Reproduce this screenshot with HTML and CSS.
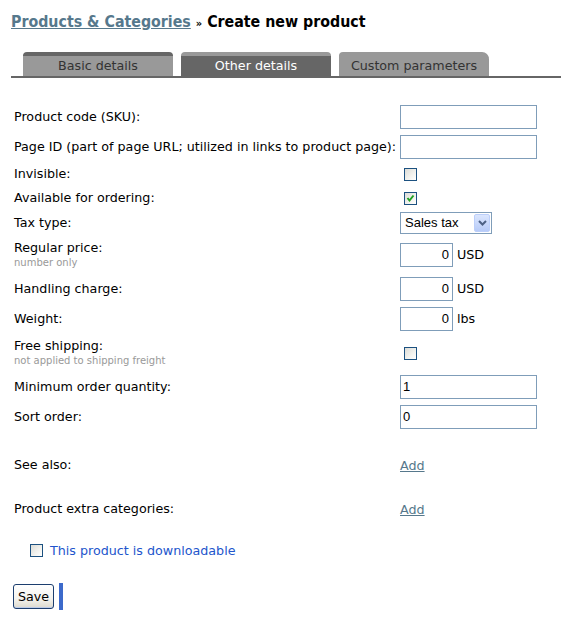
FILE: index.html
```html
<!DOCTYPE html>
<html lang="en">
<head>
<meta charset="utf-8">
<title>Create new product</title>
<link rel="stylesheet" href="styles.css">
</head>
<body>
<div class="page">
  <h1 class="title"><a href="#" class="crumb">Products &amp; Categories</a> <span class="sep">»</span> Create new product</h1>

  <div class="tabs">
    <a href="#" class="tab tab-basic">Basic details</a>
    <a href="#" class="tab tab-active">Other details</a>
    <a href="#" class="tab tab-last">Custom parameters</a>
  </div>

  <form class="form">
    <div class="grid">
      <label class="lbl">Product code (SKU):</label>
      <div class="ctl"><input class="txt wide" type="text" value=""></div>

      <label class="lbl">Page ID (part of page URL; utilized in links to product page):</label>
      <div class="ctl"><input class="txt wide" type="text" value=""></div>

      <label class="lbl">Invisible:</label>
      <div class="ctl"><span class="cb"></span></div>

      <label class="lbl">Available for ordering:</label>
      <div class="ctl"><span class="cb"><svg class="check" width="11" height="11" viewBox="0 0 11 11"><polyline points="2.5,5 4.5,7.5 8.5,2.5" fill="none" stroke="#21a121" stroke-width="2"/></svg></span></div>

      <label class="lbl">Tax type:</label>
      <div class="ctl">
        <div class="select"><span class="select-text">Sales tax</span><span class="select-btn"><svg width="9" height="6" viewBox="0 0 9 6"><polyline points="1,1 4.5,4.5 8,1" fill="none" stroke="#4d6185" stroke-width="2"/></svg></span></div>
      </div>

      <div class="lbl">
        <div>Regular price:</div>
        <div class="hint">number only</div>
      </div>
      <div class="ctl"><input class="txt num" type="text" value="0"><span class="unit">USD</span></div>

      <label class="lbl">Handling charge:</label>
      <div class="ctl"><input class="txt num" type="text" value="0"><span class="unit">USD</span></div>

      <label class="lbl">Weight:</label>
      <div class="ctl"><input class="txt num" type="text" value="0"><span class="unit">lbs</span></div>

      <div class="lbl">
        <div>Free shipping:</div>
        <div class="hint">not applied to shipping freight</div>
      </div>
      <div class="ctl"><span class="cb"></span></div>

      <label class="lbl">Minimum order quantity:</label>
      <div class="ctl"><input class="txt wide" type="text" value="1"></div>

      <label class="lbl">Sort order:</label>
      <div class="ctl"><input class="txt wide" type="text" value="0"></div>
    </div>

    <div class="links">
      <div class="lbl">See also:</div>
      <div class="ctl"><a href="#" class="add">Add</a></div>
      <div class="lbl">Product extra categories:</div>
      <div class="ctl"><a href="#" class="add">Add</a></div>
    </div>

    <div class="download">
      <span class="cb"></span><span class="download-text">This product is downloadable</span>
    </div>

    <div class="actions">
      <button type="button" class="btn">Save</button>
      <span class="bar"></span>
    </div>
  </form>
</div>
</body>
</html>
```
FILE: styles.css
```css
html, body {
  margin: 0;
  padding: 0;
  background: #fff;
}

body {
  font-family: "DejaVu Sans", Verdana, sans-serif;
  font-size: 12.7px;
  color: #000;
}

.page {
  padding-left: 11px;
}

.title {
  margin: 12px 0 0;
  font-family: "DejaVu Sans Condensed", "DejaVu Sans", sans-serif;
  font-weight: bold;
  font-size: 15.8px;
  line-height: 20px;
  color: #000;
}

.crumb {
  color: #56788c;
  text-decoration: underline;
}

.sep {
  font-size: 11px;
}

/* Tabs */
.tabs {
  margin-top: 18px;
  display: flex;
  gap: 8px;
  padding-left: 12px;
  border-bottom: 2px solid #666;
}

.tab {
  width: 150px;
  height: 20px;
  border-top: 4px solid #999;
  background: #999;
  color: #333;
  text-align: center;
  line-height: 19px;
  border-radius: 4px 4px 0 0;
  text-decoration: none;
}

.tab-basic {
  border-top-color: #666;
}

.tab-active {
  background: #666;
  color: #fff;
}

.tab-last {
  border-radius: 4px 7px 0 0;
}

/* Form grid */
.form {
  margin: 24px 0 0;
  padding-left: 3px;
}

.grid {
  display: grid;
  grid-template-columns: 386px 1fr;
  grid-template-rows: 29px 31px 24px 24px 25px 39px 29px 31px 38px 29px 31px;
  align-items: center;
}

.lbl {
  line-height: 16px;
}

.hint {
  font-size: 10px;
  line-height: 14px;
  color: #999;
}

.ctl {
  display: flex;
  align-items: baseline;
}

.txt {
  box-sizing: border-box;
  height: 24px;
  margin: 0;
  border: 1px solid #7f9db9;
  padding: 0 2px;
  font-family: "Liberation Sans", Arial, sans-serif;
  font-size: 13px;
  color: #000;
  background: #fff;
  outline: none;
}

.wide {
  width: 137px;
}

.num {
  width: 53px;
  text-align: right;
  padding-right: 3px;
}

.unit {
  margin-left: 4px;
}

/* Checkbox */
.cb {
  display: inline-block;
  box-sizing: border-box;
  width: 13px;
  height: 13px;
  margin-left: 4px;
  border: 1px solid #1c5180;
  background: linear-gradient(135deg, #dcdcd7 0%, #f3f3ef 60%, #ffffff 100%);
  position: relative;
  align-self: center;
}

.check {
  display: block;
}

/* Select */
.select {
  box-sizing: border-box;
  width: 92px;
  height: 22px;
  border: 1px solid #7f9db9;
  display: flex;
  align-items: center;
  justify-content: space-between;
  padding: 0 1px 0 4px;
  font-family: "Liberation Sans", Arial, sans-serif;
  font-size: 13px;
  align-self: center;
}

.select-btn {
  box-sizing: border-box;
  width: 16px;
  height: 18px;
  border: 1px solid #bccffa;
  border-radius: 2px;
  background: linear-gradient(#dbe6fe, #b7cbf8);
  display: flex;
  align-items: center;
  justify-content: center;
}

/* Link rows */
.links {
  margin-top: 16px;
  display: grid;
  grid-template-columns: 386px 1fr;
  grid-template-rows: 34px 34px;
  row-gap: 10px;
  align-items: center;
}

.add {
  color: #56788c;
  text-decoration: underline;
}

/* Downloadable */
.download {
  margin-top: 14px;
  height: 20px;
  display: flex;
  align-items: center;
  padding-left: 12px;
}

.download-text {
  margin-left: 7px;
  color: #2255cc;
}

/* Actions */
.actions {
  margin-top: 23px;
  height: 27px;
  display: flex;
  align-items: center;
  margin-left: -2px;
}

.btn {
  box-sizing: border-box;
  width: 41px;
  height: 25px;
  margin: 0 0 0 1px;
  padding: 0;
  border: 1px solid #1c3e6e;
  border-radius: 3px;
  background: linear-gradient(#ffffff 0%, #f4f3ee 60%, #dcd9cd 100%);
  box-shadow: inset 0 -1px 0 #bccbe9;
  font-family: "DejaVu Sans", Verdana, sans-serif;
  font-size: 12.7px;
  color: #000;
}

.bar {
  width: 4px;
  height: 27px;
  margin-left: 5px;
  background: #3c6acb;
}
```
